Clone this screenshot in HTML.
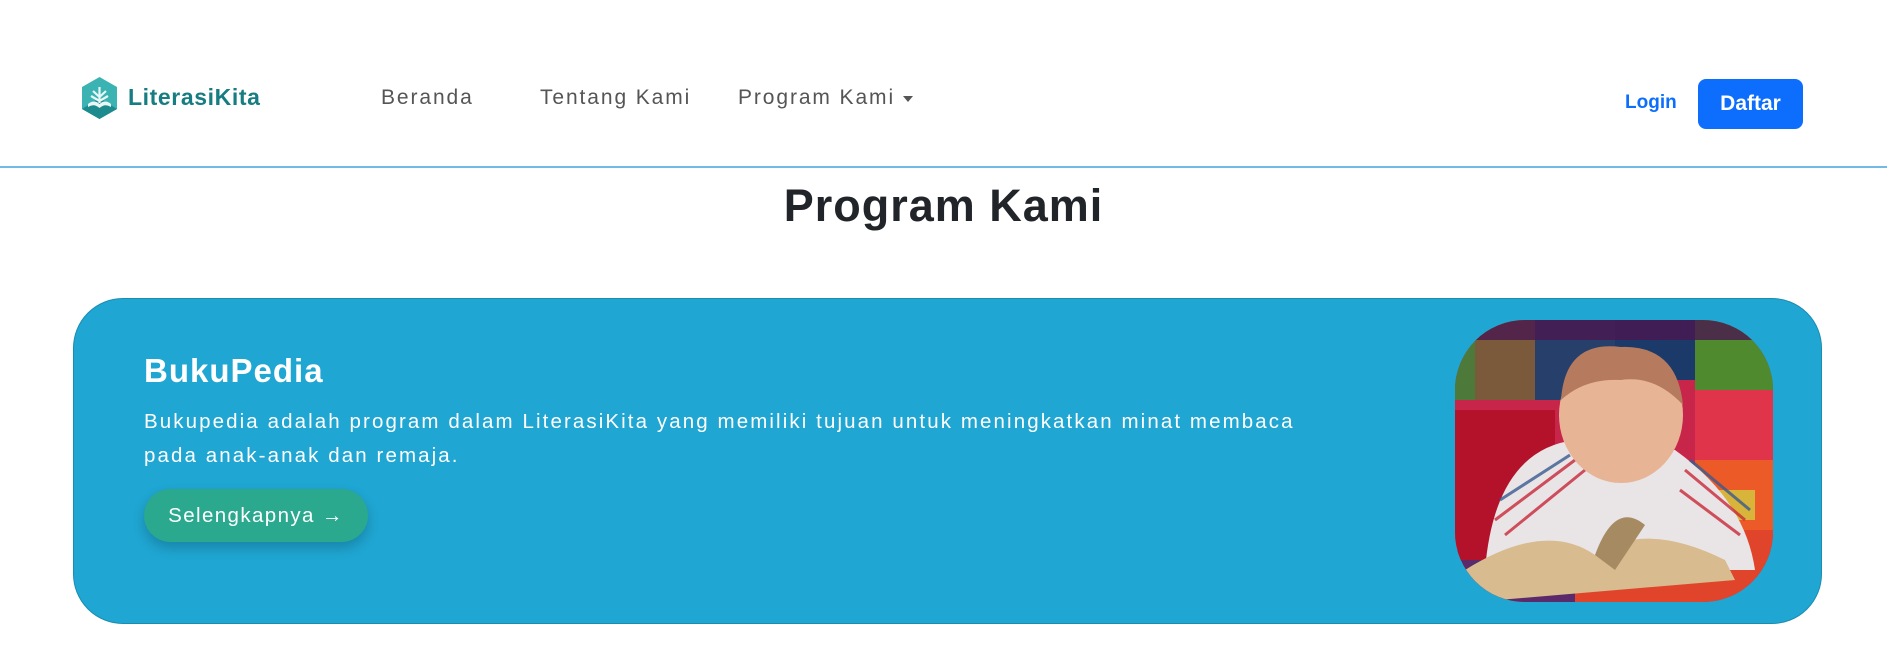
<!DOCTYPE html>
<html><head><meta charset="utf-8"><style>
*{margin:0;padding:0;box-sizing:border-box}
body{width:1887px;height:668px;background:#fff;font-family:"Liberation Sans",sans-serif;position:relative;overflow:hidden}
.a{position:absolute;white-space:nowrap}
.nav{font-size:21px;color:#555;top:86px;letter-spacing:1.9px}
</style></head><body>
<svg class="a" style="left:82px;top:77px" width="35" height="42" viewBox="0 0 35 42">
<polygon points="17.5,0 35,10 35,32 17.5,42 0,32 0,10" fill="#3bb3b3"/>
<polygon points="17.5,21 35,32 17.5,42 0,32" fill="#1d8a8e"/>
<path d="M6 27 Q12 22 17.5 27 Q23 22 29 27 L29 30 Q23 26 17.5 31 Q12 26 6 30Z" fill="#e8f7f6"/>
<path d="M17.5 26 L17.5 10 M17.5 20 L11 14 M17.5 20 L24 14 M17.5 24 L9 19 M17.5 24 L26 19" stroke="#e8f7f6" stroke-width="2.2"/>
</svg>
<div class="a" style="left:128px;top:84px;font-size:23px;font-weight:bold;color:#177d82;letter-spacing:0.6px">LiterasiKita</div>
<div class="a nav" style="left:381px">Beranda</div>
<div class="a nav" style="left:540px">Tentang Kami</div>
<div class="a nav" style="left:738px">Program Kami</div>
<div class="a" style="left:903px;top:96px;width:0;height:0;border-left:5px solid transparent;border-right:5px solid transparent;border-top:6px solid #555"></div>
<div class="a" style="left:1625px;top:92px;font-size:19px;font-weight:bold;color:#0d6efd">Login</div>
<div class="a" style="left:1698px;top:79px;width:105px;height:50px;background:#0d6efd;border-radius:8px;color:#fff;font-weight:bold;font-size:21px;text-align:center;line-height:50px">Daftar</div>
<div class="a" style="left:0;top:166px;width:1887px;height:2px;background:#72b9e6"></div>
<div class="a" style="left:0;width:1887px;text-align:center;top:180px;font-size:45px;font-weight:bold;color:#212529;letter-spacing:1px">Program Kami</div>
<div class="a" style="left:73px;top:298px;width:1749px;height:326px;background:#1fa6d2;border:1px solid #1a8db3;border-radius:50px"></div>
<div class="a" style="left:144px;top:352px;font-size:33px;font-weight:bold;color:#fff;letter-spacing:1px">BukuPedia</div>
<div class="a" style="left:144px;top:405px;font-size:20.5px;color:#fff;line-height:34px;letter-spacing:2.1px">Bukupedia adalah program dalam LiterasiKita yang memiliki tujuan untuk meningkatkan minat membaca<br>pada anak-anak dan remaja.</div>
<div class="a" style="left:144px;top:489px;width:224px;height:53px;background:#2aa98e;border-radius:27px;color:#fff;font-size:20.5px;text-align:center;line-height:53px;letter-spacing:1.4px;box-shadow:0 6px 12px rgba(0,0,0,0.2)">Selengkapnya →</div>
<svg class="a" style="left:1455px;top:320px" width="318" height="282" viewBox="0 0 318 282">
<defs><clipPath id="c"><rect width="318" height="282" rx="70"/></clipPath></defs>
<g clip-path="url(#c)">
<rect width="318" height="282" fill="#c8254a"/>
<rect x="0" y="0" width="80" height="80" fill="#4d7a3a"/>
<rect x="20" y="0" width="60" height="80" fill="#7a5a3a"/>
<rect x="80" y="0" width="80" height="80" fill="#263f6b"/>
<rect x="160" y="0" width="80" height="60" fill="#1b3a6a"/>
<rect x="240" y="0" width="78" height="70" fill="#4f8a2e"/>
<rect x="0" y="0" width="318" height="20" fill="#4a1850" opacity=".8"/>
<rect x="240" y="70" width="78" height="70" fill="#e0344a"/>
<rect x="240" y="140" width="78" height="70" fill="#ec5a28"/>
<rect x="230" y="170" width="70" height="30" fill="#d8b53a"/>
<rect x="0" y="210" width="318" height="72" fill="#e0452c"/>
<rect x="0" y="230" width="120" height="52" fill="#5a2a6a"/>
<rect x="0" y="90" width="100" height="150" fill="#b3122a"/>
<path d="M30 250 Q40 130 120 120 L220 130 Q290 180 300 250Z" fill="#e9e4e6"/>
<g stroke="#c8283a" stroke-width="3" opacity=".8"><path d="M40 200 L120 140 M50 215 L130 150 M230 150 L290 200 M225 170 L285 215"/></g>
<g stroke="#3a5a90" stroke-width="3" opacity=".8"><path d="M45 180 L115 135 M235 140 L295 190"/></g>
<ellipse cx="166" cy="95" rx="62" ry="68" fill="#e7b596"/>
<path d="M106 80 Q110 20 166 27 Q222 25 228 85 Q200 55 166 60 Q130 58 106 80Z" fill="#b67a5e"/>
<path d="M10 250 Q90 200 140 235 Q190 200 270 240 L280 260 L20 282Z" fill="#d8bb8e"/>
<path d="M140 235 Q160 180 190 205 L160 250Z" fill="#a68a62"/>
</g></svg>
</body></html>
